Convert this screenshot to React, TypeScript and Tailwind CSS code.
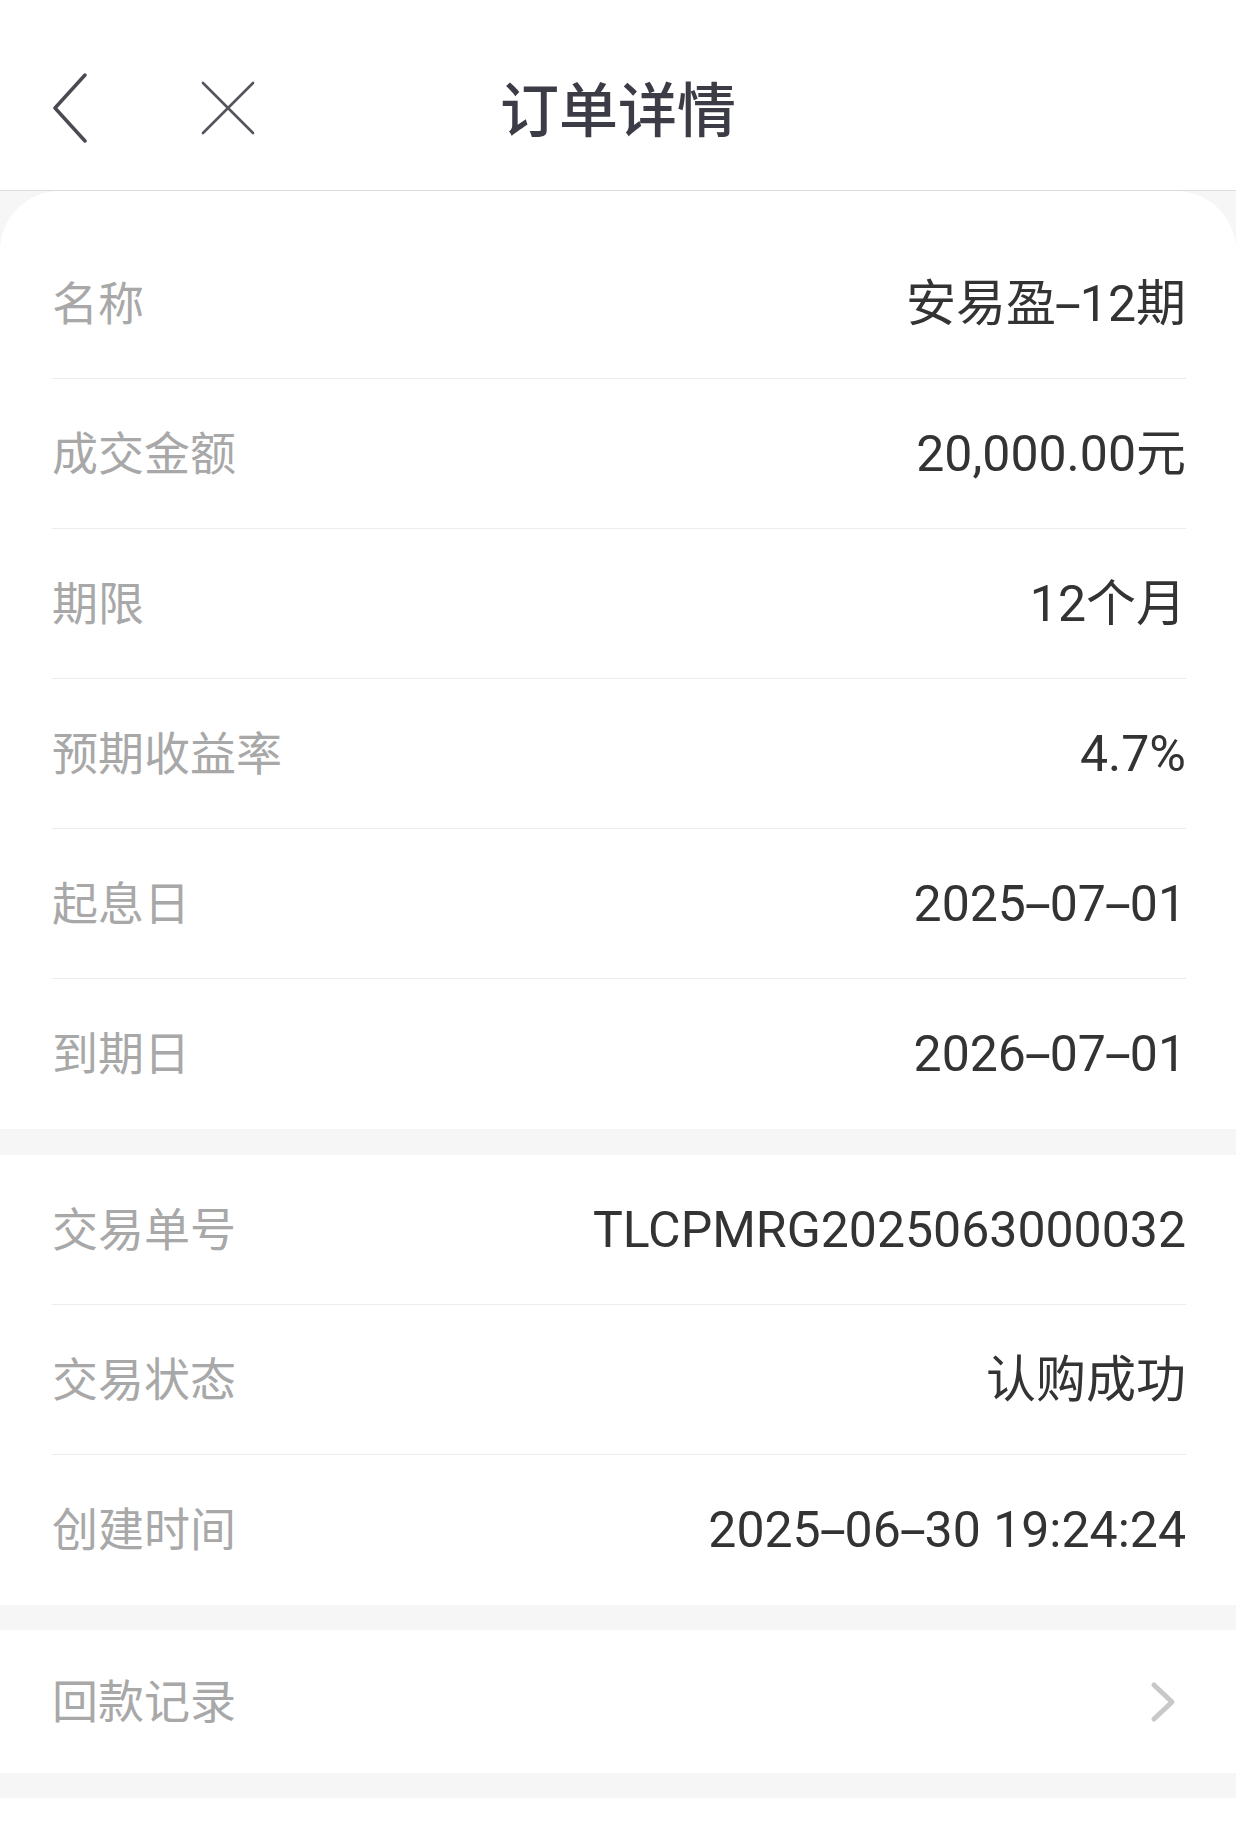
import React from "react";

const latin = { fontFamily: 'Roboto, "Noto Sans CJK SC", sans-serif' };
const cjk = { fontFamily: '"Noto Sans CJK SC", sans-serif' };

function Val({ text }: { text: string }) {
  const parts = text.split("-");
  return (
    <>
      {parts.map((p, i) => (
        <React.Fragment key={i}>
          {i > 0 && <span className="inline-block scale-x-[1.9] mx-[5px]">-</span>}
          {p}
        </React.Fragment>
      ))}
    </>
  );
}

function Row({ label, value, last }: { label: string; value: string; last?: boolean }) {
  return (
    <div className="ml-[52px] mr-[50px]">
      <div className={`h-[150px] flex items-center justify-between ${last ? "" : "border-b border-[#ececec]"}`}>
        <span className="text-[46px] text-[#a8a8a8] leading-none mb-[8px]" style={cjk}>
          {label}
        </span>
        <span className="text-[50px] text-[#333333] leading-none" style={latin}>
          <Val text={value} />
        </span>
      </div>
    </div>
  );
}

export default function App() {
  return (
    <div className="w-[1236px] h-[1826px] bg-white overflow-hidden" style={cjk}>
      <header className="h-[191px] border-b border-[#dcdcdc] bg-white grid grid-cols-[1fr_auto_1fr] items-center pt-[26px]">
        <div className="flex items-center pl-[52px]">
          <svg width="36" height="70" viewBox="0 0 36 70" fill="none">
            <polyline points="33,2 3,35 33,68" stroke="#4a4a52" strokeWidth="3.5" strokeLinecap="round" strokeLinejoin="round" />
          </svg>
          <svg className="ml-[113px]" width="54" height="54" viewBox="0 0 54 54" fill="none">
            <line x1="2" y1="2" x2="52" y2="52" stroke="#55555d" strokeWidth="2.6" strokeLinecap="round" />
            <line x1="52" y1="2" x2="2" y2="52" stroke="#55555d" strokeWidth="2.6" strokeLinecap="round" />
          </svg>
        </div>
        <h1 className="text-[59px] font-medium text-[#3c3c46] leading-none mb-[4px]" style={cjk}>
          订单详情
        </h1>
        <div />
      </header>
      <main className="bg-[#f6f6f6] flex flex-col">
        <section className="bg-white rounded-t-[60px] pt-[38px]">
          <Row label="名称" value="安易盈-12期" />
          <Row label="成交金额" value="20,000.00元" />
          <Row label="期限" value="12个月" />
          <Row label="预期收益率" value="4.7%" />
          <Row label="起息日" value="2025-07-01" />
          <Row label="到期日" value="2026-07-01" last />
        </section>
        <section className="bg-white mt-[26px]">
          <Row label="交易单号" value="TLCPMRG2025063000032" />
          <Row label="交易状态" value="认购成功" />
          <Row label="创建时间" value="2025-06-30 19:24:24" last />
        </section>
        <section className="bg-white mt-[25px] h-[143px] flex items-center justify-between pl-[52px] pr-[50px]">
          <span className="text-[46px] text-[#a8a8a8] leading-none mb-[8px]" style={cjk}>
            回款记录
          </span>
          <svg className="mr-[10px]" width="26" height="42" viewBox="0 0 26 42" fill="none">
            <polyline points="4,4 22,21 4,38" stroke="#c8c8c8" strokeWidth="5" strokeLinecap="round" strokeLinejoin="round" />
          </svg>
        </section>
        <div className="h-[25px]" />
      </main>
    </div>
  );
}
